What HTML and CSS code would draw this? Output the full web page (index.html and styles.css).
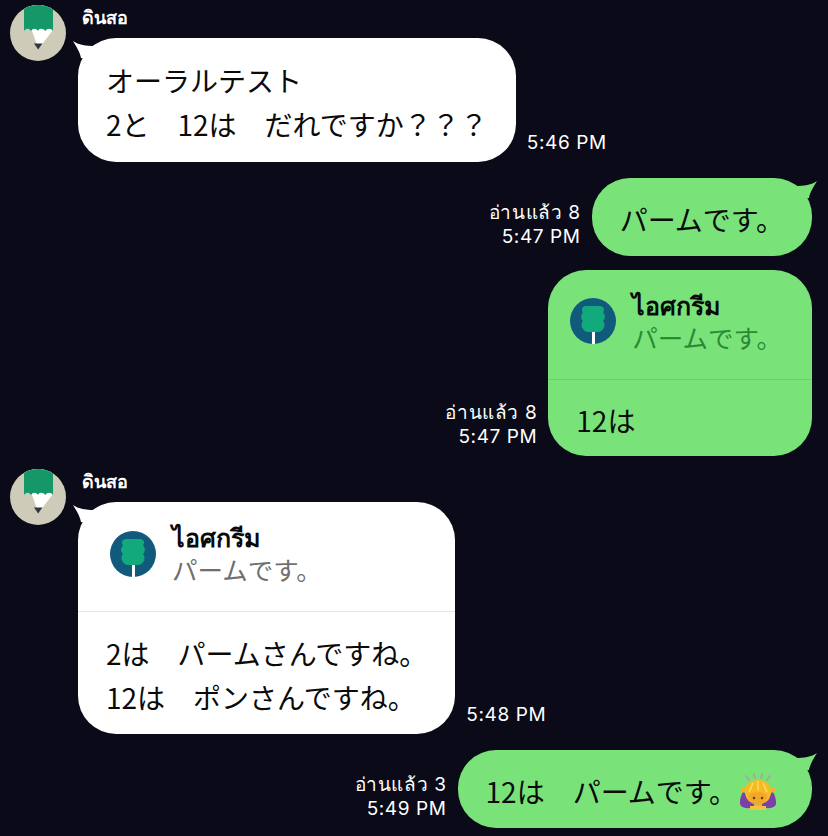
FILE: index.html
```html
<!DOCTYPE html>
<html lang="th">
<head>
    <meta charset="UTF-8">
    <meta name="viewport" content="width=device-width, initial-scale=1.0">
    <title>Chat</title>
    <link rel="stylesheet" href="styles.css">
</head>
<body>
    <svg class="defs" width="0" height="0">
        <defs>
            <symbol id="tail" viewBox="0 0 30 30">
                <path d="M8 8C15 8 24 7 29 3C26 8 22 14 21 20L10 22Z"/>
            </symbol>
            <symbol id="pencil" viewBox="0 0 56 56">
                <circle cx="28" cy="28" r="28" fill="#cfcbb9"/>
                <path d="M14 3.800A28 28 0 0 1 43 4.400V25L28.500 44Z" fill="#fff"/>
                <path d="M14 3.800A28 28 0 0 1 43 4.400V26C41 23 37 23 35.500 26C33 23 29 23 28 26C26 23 23 23 21 26C19 23 16 23 14 26Z" fill="#159768"/>
                <path d="M24 38.500H32.500L28.200 44.500Z" fill="#33363a"/>
            </symbol>
            <symbol id="icecream" viewBox="0 0 46 46">
                <circle cx="23" cy="23" r="23" fill="#115a7c"/>
                <path d="M16 8H30C34 8 35 12 33 14.500C35.500 16.500 35.500 21 33 23C35 25 35 29 33 31C32 33 30 34 28 34H18C16 34 14 33 13 31C11 29 11 25 13 23C10.500 21 10.500 16.500 13 14.500C11 12 12 8 16 8Z" fill="#12a97d"/>
                <rect x="22" y="34" width="3" height="12" fill="#fff"/>
            </symbol>
        </defs>
    </svg>

    <div class="row in first">
        <svg class="avatar"><use href="#pencil"/></svg>
        <div class="content">
            <div class="name">ดินสอ</div>
            <div class="line">
                <div class="bubble white">
                    <svg class="tail"><use href="#tail"/></svg>
                    <div class="text">
                        <p>オーラルテスト</p>
                        <p>2と　12は　だれですか？？？</p>
                    </div>
                </div>
                <div class="meta"><div>5:46 PM</div></div>
            </div>
        </div>
    </div>

    <div class="row out gap-16">
        <div class="meta"><div>อ่านแล้ว 8</div><div>5:47 PM</div></div>
        <div class="bubble green">
            <svg class="tail"><use href="#tail"/></svg>
            <div class="text"><p>パームです。</p></div>
        </div>
    </div>

    <div class="row out gap-14">
        <div class="meta"><div>อ่านแล้ว 8</div><div>5:47 PM</div></div>
        <div class="bubble green">
            <div class="quote">
                <svg class="quote-icon"><use href="#icecream"/></svg>
                <div>
                    <div class="quote-name">ไอศกรีม</div>
                    <div class="quote-text">パームです。</div>
                </div>
            </div>
            <div class="text"><p>12は</p></div>
        </div>
    </div>

    <div class="row in gap-13">
        <svg class="avatar"><use href="#pencil"/></svg>
        <div class="content">
            <div class="name">ดินสอ</div>
            <div class="line">
                <div class="bubble white">
                    <svg class="tail"><use href="#tail"/></svg>
                    <div class="quote">
                        <svg class="quote-icon"><use href="#icecream"/></svg>
                        <div>
                            <div class="quote-name">ไอศกรีม</div>
                            <div class="quote-text">パームです。</div>
                        </div>
                    </div>
                    <div class="text">
                        <p>2は　パームさんですね。</p>
                        <p>12は　ポンさんですね。</p>
                    </div>
                </div>
                <div class="meta"><div>5:48 PM</div></div>
            </div>
        </div>
    </div>

    <div class="row out gap-16">
        <div class="meta"><div>อ่านแล้ว 3</div><div>5:49 PM</div></div>
        <div class="bubble green">
            <svg class="tail"><use href="#tail"/></svg>
            <div class="text emoji-text">
                <p>12は　パームです。</p>
                <svg class="emoji" viewBox="0 0 36 37">
                    <g fill="none" stroke="#a9a79a" stroke-width="1.800" stroke-linecap="round">
                        <path d="M6 3L9 7"/>
                        <path d="M14 0.500L15 5"/>
                        <path d="M22 0.500L21 5"/>
                        <path d="M30 3L27 7"/>
                    </g>
                    <path d="M3 19C0 24 -1 31 1 33C5 36 11 36 14 33L14 24Z" fill="#7d3fa8"/>
                    <path d="M33 19C36 24 37 31 35 33C31 36 25 36 22 33L22 24Z" fill="#7d3fa8"/>
                    <circle cx="3" cy="17" r="2.500" fill="#f5b62a"/>
                    <circle cx="33" cy="17" r="2.500" fill="#f5b62a"/>
                    <path d="M18 7C27 7 32 13 31 20C30 26 27 31 18 31C9 31 6 26 5 20C4 13 9 7 18 7Z" fill="#f6bb22"/>
                    <path d="M18 8V17M13 10L9 19M23 10L27 19" stroke="#ffdc62" stroke-width="1.500" fill="none"/>
                    <path d="M9 22C12 18 24 18 27 22C27 28 23 32 18 32C13 32 9 28 9 22Z" fill="#f2a72a"/>
                    <circle cx="14" cy="25" r="1.200" fill="#5b3a1a"/>
                    <circle cx="22" cy="25" r="1.200" fill="#5b3a1a"/>
                    <path d="M10 33H26V37H10Z" fill="#f6c13f"/>
                </svg>
            </div>
        </div>
    </div>
</body>
</html>
```

FILE: styles.css
```css
html, body {
    margin: 0;
    padding: 0;
}

body {
    height: 836px;
    overflow: hidden;
    background-color: #0a0a18;
    color: #ffffff;
    font-family: "Noto Sans CJK JP", "Noto Sans", sans-serif;
}

.defs {
    position: absolute;
}

.row {
    display: flex;
    align-items: flex-end;
}

.row.in {
    align-items: flex-start;
    padding-left: 10px;
}

.row.out {
    justify-content: flex-end;
    padding-right: 16px;
}

.first {
    margin-top: 5px;
}

.gap-13 {
    margin-top: 13px;
}

.gap-14 {
    margin-top: 14px;
}

.gap-16 {
    margin-top: 16px;
}

.avatar {
    flex: none;
    width: 56px;
    height: 56px;
}

.content {
    margin-left: 12px;
}

.name {
    height: 33px;
    padding-left: 4px;
    font-family: Inter, "Noto Sans", sans-serif;
    font-size: 18px;
    font-weight: 700;
    line-height: 26px;
}

.line {
    display: flex;
    align-items: flex-end;
}

.bubble {
    position: relative;
    border-radius: 38px;
    color: #0a0a0a;
}

.white {
    background-color: #ffffff;
}

.green {
    background-color: #79e37a;
}

.tail {
    position: absolute;
    top: 0;
    width: 30px;
    height: 30px;
}

.white .tail {
    left: -6px;
    fill: #ffffff;
    transform: scaleX(-1);
}

.green .tail {
    right: -6px;
    fill: #79e37a;
}

.text {
    padding: 19px 28px 15px;
    font-size: 28px;
    line-height: 44px;
    word-spacing: 4px;
}

.white > .text {
    padding-top: 20px;
    padding-bottom: 16px;
}

.green > .quote + .text {
    padding-top: 18px;
    padding-bottom: 14px;
}

.white > .quote + .text {
    padding-top: 19px;
    padding-bottom: 15px;
}

.text p {
    margin: 0;
    white-space: nowrap;
}

.emoji-text {
    display: flex;
    align-items: center;
    padding-right: 36px;
}

.emoji {
    flex: none;
    width: 36px;
    height: 37px;
    margin-left: 3px;
}

.meta {
    padding: 0 11px 7px;
    font-family: Inter, "Noto Sans", sans-serif;
    font-size: 19px;
    line-height: 24px;
    letter-spacing: 0.6px;
    text-align: right;
    white-space: nowrap;
}

.quote {
    display: flex;
    height: 110px;
    padding: 21px 30px 0 22px;
    box-sizing: border-box;
    border-bottom: 1px solid #6cd06e;
}

.white .quote {
    padding-left: 32px;
    border-bottom-color: #e6e6e6;
}

.quote-icon {
    flex: none;
    width: 46px;
    height: 46px;
    margin-top: 7px;
    margin-right: 16px;
}

.white .quote-icon {
    margin-top: 8px;
}

.quote-name {
    font-family: Inter, "Noto Sans", sans-serif;
    font-size: 25px;
    font-weight: 700;
    line-height: 30px;
}

.quote-text {
    font-size: 25.500px;
    line-height: 31px;
    white-space: nowrap;
    color: #2a8a34;
}

.white .quote-text {
    color: #6f6f6f;
}
```
